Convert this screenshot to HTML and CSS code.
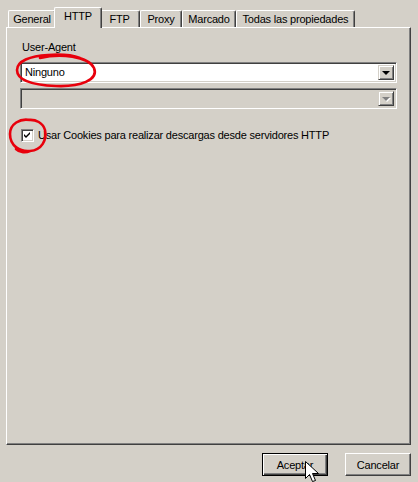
FILE: index.html
```html
<!DOCTYPE html>
<html lang="es">
<head>
<meta charset="utf-8">
<title>Propiedades</title>
<link rel="stylesheet" href="styles.css">
</head>
<body>
<div class="dialog">
  <div class="tabs">
    <div class="tab tab-general">General</div>
    <div class="tab tab-active tab-http">HTTP</div>
    <div class="tab tab-ftp">FTP</div>
    <div class="tab tab-proxy">Proxy</div>
    <div class="tab tab-marcado">Marcado</div>
    <div class="tab tab-todas">Todas las propiedades</div>
  </div>
  <div class="panel">
    <div class="label">User-Agent</div>
    <div class="combo">
      <div class="combo-text">Ninguno</div>
      <div class="combo-btn"><span class="arrow"></span></div>
    </div>
    <div class="combo combo-disabled">
      <div class="combo-text"></div>
      <div class="combo-btn"><span class="arrow arrow-disabled"></span></div>
    </div>
    <label class="check-row">
      <span class="checkbox">
        <svg width="7" height="7" viewBox="0 0 7 7"><path d="M0 2 L2 4 L6 0 L6 2 L2 6 L0 4 Z" fill="#000"/></svg>
      </span>
      <span class="check-text">Usar Cookies para realizar descargas desde servidores HTTP</span>
    </label>
  </div>
  <div class="buttons">
    <div class="btn btn-default"><span>Aceptar</span></div>
    <div class="btn"><span>Cancelar</span></div>
  </div>
</div>
<svg class="overlay" width="418" height="482" viewBox="0 0 418 482">
  <path d="M40 58 C60 53 88 56 94 68 C99 80 80 87 56 86 C32 85 17 80 17 70 C17 61 30 56 48 55 C62 54 72 55 80 58" fill="none" stroke="#e8000c" stroke-width="2.6" stroke-linecap="round"/>
  <path d="M30 120 C20 118 10 124 10 134 C10 146 20 152 30 151 C42 150 47 140 45 130 C43 123 36 119 28 120 M30 151 C26 153 20 153 16 149" fill="none" stroke="#e8000c" stroke-width="2.6" stroke-linecap="round"/>
  <path d="M305.5 461.5 L305.5 478.5 L309.5 474.5 L312.5 481.5 L315.5 480.5 L312.5 473.5 L318.5 473.5 Z" fill="#fff" stroke="#000" stroke-width="1" stroke-linejoin="miter"/>
</svg>
</body>
</html>
```
FILE: styles.css
```css
html, body {
  margin: 0;
  padding: 0;
}
body {
  width: 418px;
  height: 482px;
  background: #d4d0c8;
  font-family: "Liberation Sans", Arial, sans-serif;
  font-size: 11px;
  letter-spacing: -0.2px;
  color: #000;
  position: relative;
  overflow: hidden;
}
.dialog {
  padding: 7px 7px 0 6px;
  display: flex;
  flex-direction: column;
}
.tabs {
  display: flex;
  align-items: flex-end;
  height: 20px;
  padding-left: 2px;
  position: relative;
  z-index: 1;
}
.tab {
  height: 17px;
  box-sizing: border-box;
  border-top: 1px solid #fff;
  border-left: 1px solid #fff;
  border-right: 1px solid #404040;
  box-shadow: inset -1px 0 0 #808080;
  border-top-left-radius: 2px;
  border-top-right-radius: 2px;
  padding: 2px 0 0 0;
  text-align: center;
  white-space: nowrap;
  line-height: 13px;
}
.tab-general { width: 48px; }
.tab-http { width: 48px; }
.tab-ftp { width: 40px; }
.tab-proxy { width: 42px; }
.tab-marcado { width: 54px; }
.tab-todas { width: 119px; }
.tab-active {
  height: 21px;
  margin: 0 -2px 0 -2px;
  padding-top: 2px;
  background: #d4d0c8;
  position: relative;
  z-index: 2;
  margin-bottom: -1px;
}
.tab-active + .tab { border-left: none; }
.panel {
  height: 418px;
  box-sizing: border-box;
  border-top: 1px solid #fff;
  border-left: 1px solid #fff;
  border-right: 1px solid #404040;
  border-bottom: 1px solid #404040;
  box-shadow: inset -1px -1px 0 #808080;
  padding: 13px 13px 0 13px;
  display: flex;
  flex-direction: column;
}
.label {
  padding-left: 2px;
  height: 15px;
  line-height: 13px;
}
.combo {
  margin-top: 6px;
  height: 21px;
  box-sizing: border-box;
  border-top: 1px solid #808080;
  border-left: 1px solid #808080;
  border-right: 1px solid #fff;
  border-bottom: 1px solid #fff;
  box-shadow: inset 1px 1px 0 #404040, inset -1px -1px 0 #d4d0c8;
  background: #fff;
  display: flex;
  padding: 2px;
}
.combo + .combo { margin-top: 5px; }
.combo-disabled { background: #d4d0c8; }
.combo-text {
  flex: 1;
  padding-left: 2px;
  line-height: 15px;
}
.combo-btn {
  width: 16px;
  height: 15px;
  box-sizing: border-box;
  background: #d4d0c8;
  border-top: 1px solid #d4d0c8;
  border-left: 1px solid #d4d0c8;
  border-right: 1px solid #404040;
  border-bottom: 1px solid #404040;
  box-shadow: inset 1px 1px 0 #fff, inset -1px -1px 0 #808080;
  display: flex;
  align-items: center;
  justify-content: center;
}
.arrow {
  width: 0;
  height: 0;
  border-left: 4px solid transparent;
  border-right: 4px solid transparent;
  border-top: 4px solid #000;
  margin-top: 1px;
}
.arrow-disabled {
  border-top-color: #808080;
  filter: drop-shadow(1px 1px 0 #fff);
}
.check-row {
  margin-top: 20px;
  display: flex;
  align-items: center;
  padding-left: 1px;
}
.checkbox {
  width: 13px;
  height: 13px;
  box-sizing: border-box;
  border-top: 1px solid #808080;
  border-left: 1px solid #808080;
  border-right: 1px solid #fff;
  border-bottom: 1px solid #fff;
  box-shadow: inset 1px 1px 0 #404040, inset -1px -1px 0 #d4d0c8;
  background: #fff;
  display: flex;
  align-items: center;
  justify-content: center;
}
.check-text {
  margin-left: 4px;
  line-height: 13px;
}
.buttons {
  display: flex;
  justify-content: flex-end;
  gap: 17px;
  margin-top: 8px;
  padding-right: 0;
}
.btn {
  width: 66px;
  height: 23px;
  box-sizing: border-box;
  border-top: 1px solid #fff;
  border-left: 1px solid #fff;
  border-right: 1px solid #404040;
  border-bottom: 1px solid #404040;
  box-shadow: inset -1px -1px 0 #808080;
  display: flex;
  align-items: center;
  justify-content: center;
}
.btn-default {
  border: 1px solid #000;
  box-shadow: inset 1px 1px 0 #fff, inset -1px -1px 0 #404040, inset -2px -2px 0 #808080;
}
.overlay {
  position: absolute;
  left: 0;
  top: 0;
  pointer-events: none;
}
```
